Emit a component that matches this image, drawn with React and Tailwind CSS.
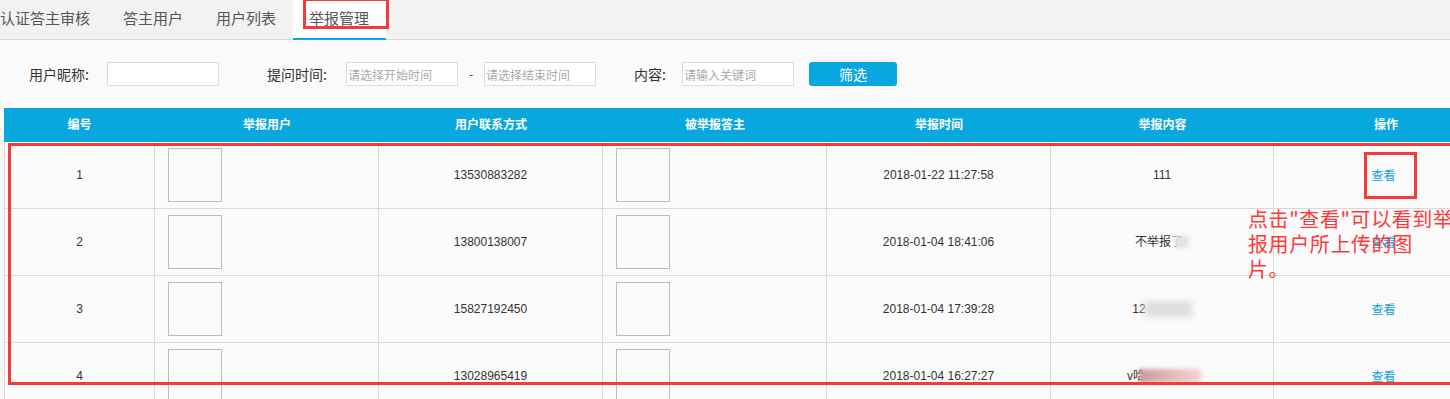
import React from "react";

const FONT = { fontFamily: '"Liberation Sans", Arial, "Noto Sans CJK SC", sans-serif' };
const CJK = { fontFamily: '"Noto Sans CJK SC", "Liberation Sans", sans-serif' };

const tabs = ["认证答主审核", "答主用户", "用户列表", "举报管理"];
const headers = ["编号", "举报用户", "用户联系方式", "被举报答主", "举报时间", "举报内容", "操作"];

const rows = [
  { id: 1, phone: "13530883282", time: "2018-01-22 11:27:58", content: <span>111</span> },
  {
    id: 2,
    phone: "13800138007",
    time: "2018-01-04 18:41:06",
    content: (
      <span className="inline-flex items-center">
        不举报<span className="text-[#888]">了</span>
        <span className="inline-block w-[14px] h-[12px] -ml-[8px] bg-[#e2e2e2] blur-[2px]" />
      </span>
    ),
  },
  {
    id: 3,
    phone: "15827192450",
    time: "2018-01-04 17:39:28",
    content: (
      <span className="inline-flex items-center">
        12
        <span className="inline-block w-[48px] h-[16px] -ml-[2px] bg-[#dedede] blur-[3px]" />
      </span>
    ),
  },
  {
    id: 4,
    phone: "13028965419",
    time: "2018-01-04 16:27:27",
    content: (
      <span className="inline-flex items-center pl-[4px]">
        v哈
        <span className="inline-block w-[62px] h-[14px] -ml-[6px] bg-gradient-to-r from-[#c99c9c] to-[#fad2d2] blur-[2px]" />
      </span>
    ),
  },
];

const grid = "grid grid-cols-[151px_224px_224px_224px_224px_223px_224px]";

function ImgBox() {
  return <div className="w-[54px] h-[54px] border border-[#bdbdbd] bg-[#fbfbfb]" />;
}

export default function App() {
  return (
    <div className="relative w-[1450px] h-[399px] overflow-hidden bg-[#fafafa]" style={CJK}>
      {/* tabs */}
      <div className="flex h-[40px] bg-[#f2f2f2] border-b border-[#d9d9d9]">
        <div className="flex -ml-[16.5px]">
          {tabs.map((t, i) => {
            const active = i === 3;
            return (
              <div
                key={t}
                className={
                  "relative h-[39px] px-[16.5px] flex items-center pb-[2px] text-[15px] text-[#555] " +
                  (active ? "bg-white" : "")
                }
              >
                {t}
                {active && (
                  <>
                    <div className="absolute left-0 right-0 bottom-[-1px] h-[2px] bg-[#0ba6df]" />
                    <div className="absolute left-[10px] top-[-2px] w-[86px] h-[31px] border-[3px] border-[#f53a3a]" />
                  </>
                )}
              </div>
            );
          })}
        </div>
      </div>

      {/* filter */}
      <div className="flex items-center h-[24px] mt-[22px] text-[14px] text-[#333]">
        <span className="ml-[29px] w-[78px]">用户昵称:</span>
        <input className="w-[112px] h-[24px] border border-[#dcdcdc] bg-white outline-none" />
        <span className="ml-[48px] w-[79px]">提问时间:</span>
        <input
          placeholder="请选择开始时间"
          className="w-[112px] h-[24px] border border-[#dcdcdc] bg-white px-[1px] text-[12px] outline-none placeholder:text-[#aaa]"
        />
        <span className="w-[26px] text-center text-[12px]">-</span>
        <input
          placeholder="请选择结束时间"
          className="w-[112px] h-[24px] border border-[#dcdcdc] bg-white px-[1px] text-[12px] outline-none placeholder:text-[#aaa]"
        />
        <span className="ml-[38px] w-[48px]">内容:</span>
        <input
          placeholder="请输入关键词"
          className="w-[112px] h-[24px] border border-[#dcdcdc] bg-white px-[1px] text-[12px] outline-none placeholder:text-[#aaa]"
        />
        <button className="ml-[15px] w-[88px] h-[24px] rounded-[3px] bg-[#0aa6df] text-white text-[14px]">
          筛选
        </button>
      </div>

      {/* table */}
      <div className="ml-[4px] mt-[22px] w-[1446px] overflow-hidden text-[12px] text-[#333]" style={FONT}>
        <div className="w-[1494px]">
          <div className={grid + " h-[34px] bg-[#08a8df] text-white font-bold"}>
            {headers.map((h) => (
              <div key={h} className="flex items-center justify-center">
                {h}
              </div>
            ))}
          </div>
          {rows.map((r) => (
            <div key={r.id} className={grid + " h-[67px] bg-[#fbfbfb] border-b border-[#d9d9d9]"}>
              <div className="border-l border-r border-[#d9d9d9] flex items-center justify-center">{r.id}</div>
              <div className="border-r border-[#d9d9d9] pl-[13px] pt-[6px]">
                <ImgBox />
              </div>
              <div className="border-r border-[#d9d9d9] flex items-center justify-center">{r.phone}</div>
              <div className="border-r border-[#d9d9d9] pl-[13px] pt-[6px]">
                <ImgBox />
              </div>
              <div className="border-r border-[#d9d9d9] flex items-center justify-center">{r.time}</div>
              <div className="border-r border-[#d9d9d9] flex items-center justify-center">{r.content}</div>
              <div className="border-r border-[#d9d9d9] flex items-center justify-center">
                <span className="text-[#0aa2dd] mr-[4px]" style={CJK}>查看</span>
              </div>
            </div>
          ))}
        </div>
      </div>

      {/* annotations */}
      <div className="absolute left-[8px] top-[143px] w-[1460px] h-[242px] border-[3px] border-[#f53a3a] pointer-events-none" />
      <div className="absolute left-[1364px] top-[152px] w-[53px] h-[47px] border-[3px] border-[#f53a3a] pointer-events-none" />
      <div className="absolute left-[1248px] top-[206px] text-[20px] leading-[25px] tracking-[0.6px] text-[#fb3a3a] whitespace-nowrap" style={CJK}>
        <div>点击"查看"可以看到举</div>
        <div>报用户所上传的图</div>
        <div>片。</div>
      </div>
    </div>
  );
}
